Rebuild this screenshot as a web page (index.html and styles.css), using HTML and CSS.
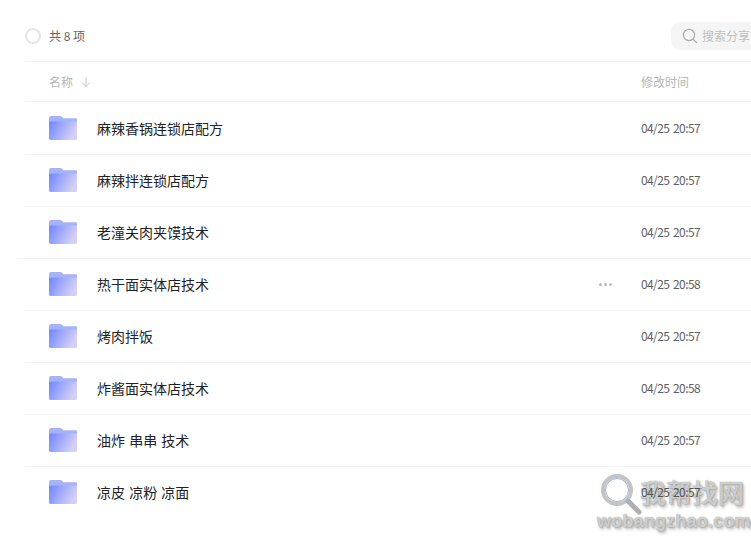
FILE: index.html
```html
<!DOCTYPE html>
<html lang="zh">
<head>
<meta charset="utf-8">
<title>共 8 项</title>
<link rel="stylesheet" href="styles.css">
</head>
<body>
<svg class="defs" width="0" height="0" aria-hidden="true">
  <defs>
    <linearGradient id="fg" x1="0" y1="0" x2="1" y2="0.35">
      <stop offset="0" stop-color="#7085ff"/>
      <stop offset="1" stop-color="#d3d0f4"/>
    </linearGradient>
    <symbol id="folder" viewBox="0 0 28 24">
      <path d="M0 2a2 2 0 0 1 2-2h9c1 0 1.600.4 2.200 1l1.300 1.300H27a1 1 0 0 1 1 1V8H0z" fill="#a4b3ff"/>
      <path d="M0 5.500h28V22.500a1.500 1.500 0 0 1-1.500 1.500H1.500A1.500 1.500 0 0 1 0 22.500z" fill="url(#fg)"/>
    </symbol>
  </defs>
</svg>
<main class="page">
  <div class="toolbar">
    <span class="check"></span>
    <span class="count">共 8 项</span>
    <div class="search">
      <svg class="search-icon" viewBox="0 0 16 16" width="16" height="16"><circle cx="7" cy="7" r="5.600" fill="none" stroke="#aaa" stroke-width="1.200"/><path d="M11.200 11.200 15 15" stroke="#aaa" stroke-width="1.200" fill="none"/></svg>
      <span class="search-text">搜索分享</span>
    </div>
  </div>
  <div class="head">
    <div class="head-name">名称
      <svg class="sort" viewBox="0 0 10 12" width="10" height="12"><path d="M5 1v9.500M1.200 6.800 5 10.600l3.800-3.800" fill="none" stroke="#c4c4c4" stroke-width="1"/></svg>
    </div>
    <div class="head-time">修改时间</div>
  </div>
  <div class="row"><svg class="folder"><use href="#folder"/></svg><span class="name">麻辣香锅连锁店配方</span><time class="time">04/25 20:57</time></div>
  <div class="row"><svg class="folder"><use href="#folder"/></svg><span class="name">麻辣拌连锁店配方</span><time class="time">04/25 20:57</time></div>
  <div class="row row-before-hover"><svg class="folder"><use href="#folder"/></svg><span class="name">老潼关肉夹馍技术</span><time class="time">04/25 20:57</time></div>
  <div class="row"><svg class="folder"><use href="#folder"/></svg><span class="name">热干面实体店技术</span><span class="more"><i></i><i></i><i></i></span><time class="time">04/25 20:58</time></div>
  <div class="row"><svg class="folder"><use href="#folder"/></svg><span class="name">烤肉拌饭</span><time class="time">04/25 20:57</time></div>
  <div class="row"><svg class="folder"><use href="#folder"/></svg><span class="name">炸酱面实体店技术</span><time class="time">04/25 20:58</time></div>
  <div class="row"><svg class="folder"><use href="#folder"/></svg><span class="name">油炸 串串 技术</span><time class="time">04/25 20:57</time></div>
  <div class="row"><svg class="folder"><use href="#folder"/></svg><span class="name">凉皮 凉粉 凉面</span><time class="time time-over">04/25 20:57</time></div>
</main>
<div class="watermark">
  <svg class="wm-glass" viewBox="0 0 46 46" width="46" height="46">
    <circle cx="19" cy="18" r="14" fill="#fff" fill-opacity=".35" stroke="#c4c4c4" stroke-width="4"/>
    <circle cx="19" cy="18" r="11.500" fill="none" stroke="#9fb2cc" stroke-width="1"/>
    <path d="M30 29 41 40" stroke="#b0b0b0" stroke-width="5" stroke-linecap="round"/>
  </svg>
  <span class="wm-cn">我帮找网</span>
  <span class="wm-en">wobangzhao.com</span>
</div>
</body>
</html>
```
FILE: styles.css
```css
html, body { margin: 0; padding: 0; }
body {
  width: 751px;
  height: 541px;
  overflow: hidden;
  background: #fff;
  font-family: "Noto Sans CJK SC", "Noto Sans", sans-serif;
  position: relative;
}
.defs { position: absolute; }
.page { padding-left: 25px; }
.toolbar {
  height: 51px;
  padding-top: 10px;
  display: flex;
  align-items: center;
  border-bottom: 1px solid #f3f3f3;
  overflow: hidden;
}
.check {
  width: 12px;
  height: 12px;
  border: 2px solid #e6e6e6;
  border-radius: 50%;
  flex: none;
}
.count { margin-left: 8px; font-size: 12px; color: #666; }
.search {
  margin-left: auto;
  width: 100%;
  max-width: 69px;
  flex: none;
  height: 28px;
  border-radius: 9px 0 0 9px;
  background: #f5f5f5;
  display: flex;
  align-items: center;
  padding-left: 11px;
  white-space: nowrap;
  overflow: hidden;
}
.search-icon { flex: none; }
.search-text { margin-left: 4px; font-size: 12px; color: #c0c0c0; }
.head {
  height: 39px;
  margin-bottom: 1px;
  display: flex;
  align-items: center;
  border-bottom: 1px solid #f3f3f3;
  font-size: 12px;
  color: #b5b5b5;
}
.head-name { margin-left: 24px; display: flex; align-items: center; gap: 8px; }
.sort { flex: none; }
.head-time { margin-left: auto; width: 110px; }
.row {
  height: 51px;
  display: flex;
  align-items: center;
  border-bottom: 1px solid #f3f3f3;
  position: relative;
}
.row:last-of-type { border-bottom: 0; }
.row-before-hover::after {
  content: "";
  position: absolute;
  left: -8px;
  width: 8px;
  bottom: -1px;
  height: 1px;
  background: #f3f3f3;
}
.folder { width: 28px; height: 24px; margin-left: 24px; flex: none; margin-top: -1px; }
.name { margin-left: 20px; margin-bottom: 2px; font-size: 14px; color: #222; white-space: pre; flex: 1; word-spacing: 1px; }
.time { width: 110px; margin-bottom: 2px; flex: none; font-size: 12px; color: #5f5f5f; letter-spacing: -0.6px; word-spacing: 1.6px; }
.time-over { position: relative; z-index: 2; color: #555; }
.more { display: flex; gap: 2px; margin-right: 29px; }
.more i { width: 3px; height: 3px; border-radius: 50%; background: #bbb; display: block; }
.watermark {
  position: absolute;
  left: 596px;
  top: 471px;
  width: 155px;
  height: 66px;
  z-index: 1;
  color: rgba(255, 255, 255, .6);
  text-shadow: 0 0 1px #7f7f7f, 1px 1px 2px #aaa, 2px 3px 3px #cfcfcf;
  pointer-events: none;
}
.wm-glass { position: absolute; left: 2px; top: 1px; }
.wm-cn { position: absolute; left: 44px; top: 5px; font-size: 26px; line-height: 32px; font-weight: 500; white-space: nowrap; }
.wm-en { position: absolute; left: 1px; top: 38px; font-size: 18px; line-height: 24px; font-weight: 700; font-family: "Liberation Sans", sans-serif; white-space: nowrap; letter-spacing: .2px; }
```
